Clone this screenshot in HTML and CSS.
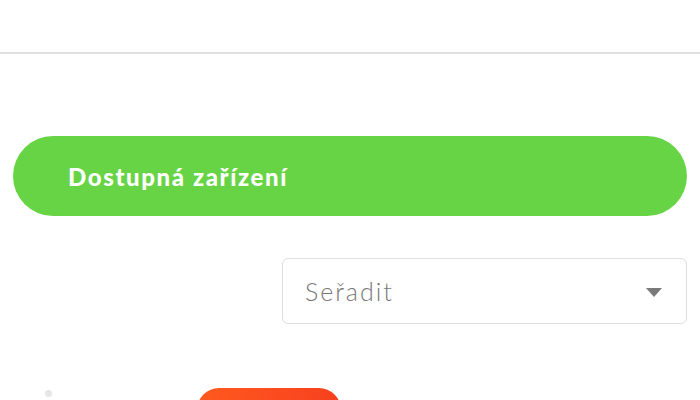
FILE: index.html
```html
<!DOCTYPE html>
<html lang="cs">
<head>
<meta charset="utf-8"/>
<meta content="width=device-width, initial-scale=1.0" name="viewport"/>
<title>Dostupná zařízení</title>
<link rel="stylesheet" href="styles.css">
</head>
<body>
<header class="topbar"></header>
<main class="content">
  <h2 class="section-title">Dostupná zařízení</h2>
  <div class="toolbar">
    <div class="sort-select">
      <span>Seřadit</span>
      <svg class="caret" width="16" height="9" viewBox="0 0 16 9"><path d="M0 0h16L8 9z" fill="#7a7a7a"/></svg>
    </div>
  </div>
  <div class="devices">
    <span class="dot"></span>
    <button class="device-btn" type="button"></button>
  </div>
</main>
</body>
</html>
```

FILE: styles.css
```css
body { margin: 0; background: #fff; font-family: "Lato", "Noto Sans", sans-serif; color: #333; overflow: hidden; }
.topbar { height: 52px; border-bottom: 2px solid #e0e0e0; }
.content { padding: 82px 13px 0; }
.section-title {
  margin: 0;
  height: 80px;
  display: flex;
  align-items: center;
  padding-left: 55px;
  background: #67d445;
  border-radius: 40px;
  color: #fff;
  font-size: 24px;
  font-weight: 900;
  letter-spacing: 1.6px;
}
.toolbar { display: flex; justify-content: flex-end; margin-top: 42px; }
.sort-select {
  width: 405px;
  height: 66px;
  box-sizing: border-box;
  border: 1px solid #dedede;
  border-radius: 6px;
  display: flex;
  align-items: center;
  justify-content: space-between;
  padding: 0 24px 0 22px;
  font-size: 25px;
  font-weight: 300;
  letter-spacing: 2px;
  color: #777;
}
.caret { margin-top: 2px; }
.devices { display: flex; align-items: flex-start; margin-top: 64px; }
.dot { width: 7px; height: 7px; border-radius: 50%; background: #e4e6ea; margin: 2px 0 0 32px; }
.device-btn {
  width: 144px;
  height: 60px;
  margin-left: 145px;
  border: none;
  border-radius: 22px;
  background: linear-gradient(90deg, #ff5a1e, #f7401f);
}
```
